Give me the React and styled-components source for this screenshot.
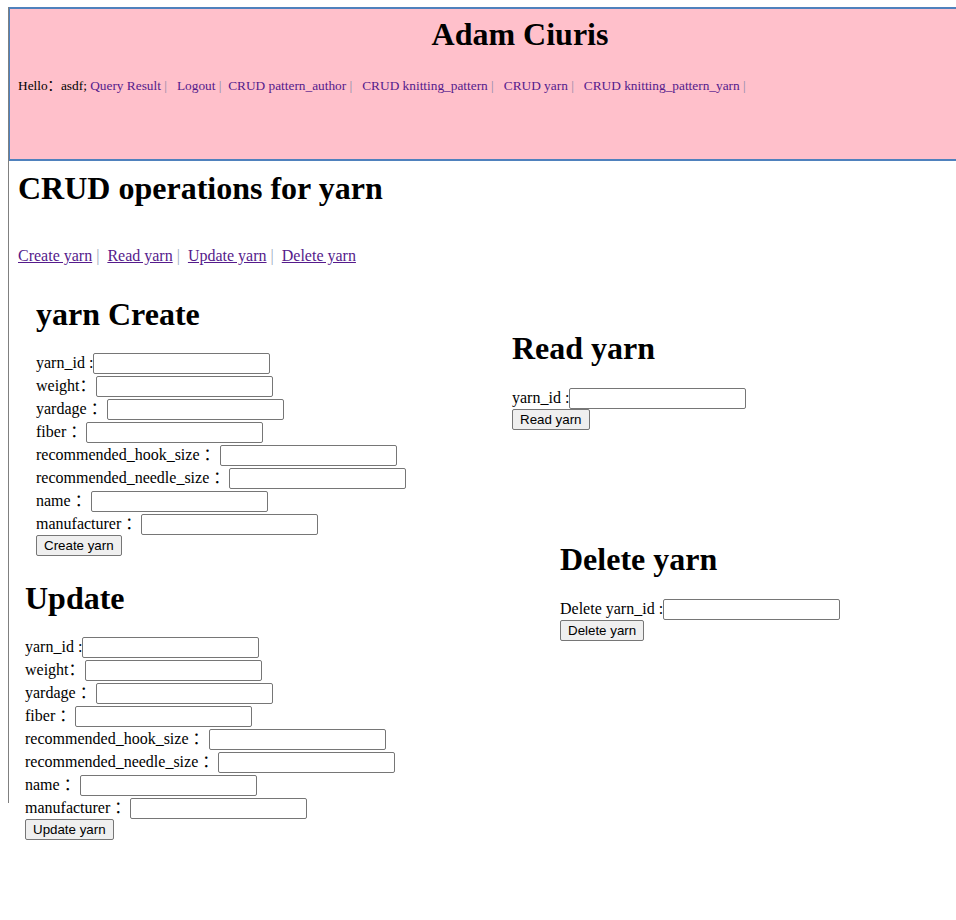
import React from 'react';
import styled, { createGlobalStyle } from 'styled-components';

const GlobalStyle = createGlobalStyle`
  body {
    margin: 0;
    background: #fff;
    color: #000;
    font-family: 'Liberation Serif', 'Noto Sans CJK SC', serif;
    font-size: 16px;
  }
`;

// the gray rule on the left stops short of the page's last rows, so it is
// drawn as a background stripe rather than a border
const Page = styled.div`
  margin: 7px 0 0 8px;
  padding-bottom: 60px;
  background: linear-gradient(#808080, #808080) no-repeat 0 0 / 1px 796px;
  overflow-x: clip;
`;

const Header = styled.header`
  width: 1023px;
  height: 154px;
  box-sizing: border-box;
  margin-left: 1px;
  background: #ffc0cb;
  border: 2px solid #4f81bd;
  border-left-width: 1px;
`;

const SiteTitle = styled.h1`
  margin: 0;
  padding-top: 7px;
  font-size: 32px;
  line-height: 37px;
  font-weight: bold;
  text-align: center;
`;

const Nav = styled.div`
  margin-top: 25px;
  padding-left: 8px;
  font-size: 13.33px;
  line-height: 15px;
`;

const NavLink = styled.a`
  color: #551a8b;
  text-decoration: none;
`;

const Bar = styled.span`
  color: ${(p) => p.$color || '#8a8aa8'};
`;

const Main = styled.main`
  padding-left: 10px;
`;

const PageTitle = styled.h1`
  margin: 9px 0 0;
  font-size: 32px;
  line-height: 37px;
  font-weight: bold;
`;

const OpLinks = styled.div`
  margin-top: 40px;
  font-size: 16px;
  line-height: 18px;
`;

const OpLink = styled.a`
  color: #551a8b;
  text-decoration: underline;
`;

const Columns = styled.div`
  display: flex;
  align-items: flex-start;
`;

const Column = styled.div`
  width: ${(p) => p.$width || 'auto'};
  flex: none;
`;

const Section = styled.section`
  margin-top: ${(p) => p.$top}px;
  padding-left: ${(p) => p.$indent || 0}px;
`;

const SectionTitle = styled.h1`
  margin: 0 0 ${(p) => p.$gap || 20}px;
  font-size: 32px;
  line-height: 37px;
  font-weight: bold;
`;

const Row = styled.div`
  display: flex;
  align-items: baseline;
  height: 23px;
  box-sizing: border-box;
  padding-top: 1px;
  line-height: 16px;
  white-space: pre;
`;

const Input = styled.input`
  width: 177px;
  height: 21px;
  box-sizing: border-box;
  margin: 0;
  padding: 1px 2px;
  border: 1px solid #767676;
  border-radius: 2px;
  background: #fff;
  font-family: 'Liberation Sans', Arial, sans-serif;
  font-size: 13.33px;
`;

const Button = styled.button`
  display: block;
  height: 21px;
  margin: -1px 0 0;
  padding: 0 7px;
  border: 1px solid #767676;
  border-radius: 2px;
  background: #efefef;
  color: #000;
  font-family: 'Liberation Sans', Arial, sans-serif;
  font-size: 13.33px;
`;

const NAV = [
  { label: 'Query Result', gap: 3 },
  { label: 'Logout', gap: 2 },
  { label: 'CRUD pattern_author', gap: 3 },
  { label: 'CRUD knitting_pattern', gap: 3 },
  { label: 'CRUD yarn', gap: 3 },
  { label: 'CRUD knitting_pattern_yarn', gap: 0 },
];

const OPS = ['Create yarn', 'Read yarn', 'Update yarn', 'Delete yarn'];

const FIELDS = [
  'yarn_id :',
  'weight：',
  'yardage ：',
  'fiber ：',
  'recommended_hook_size ：',
  'recommended_needle_size ：',
  'name ：',
  'manufacturer ：',
];

const YarnForm = ({ title, button, top, indent, gap }) => (
  <Section $top={top} $indent={indent}>
    <SectionTitle $gap={gap}>{title}</SectionTitle>
    {FIELDS.map((f) => (
      <Row key={f}>
        <span>{f}</span>
        <Input type="text" />
      </Row>
    ))}
    <Button type="button">{button}</Button>
  </Section>
);

const SingleForm = ({ title, label, button, top, indent }) => (
  <Section $top={top} $indent={indent}>
    <SectionTitle>{title}</SectionTitle>
    <Row>
      <span>{label}</span>
      <Input type="text" />
    </Row>
    <Button type="button">{button}</Button>
  </Section>
);

const App = () => (
  <>
    <GlobalStyle />
    <Page>
      <Header>
        <SiteTitle>Adam Ciuris</SiteTitle>
        <Nav>
          Hello：asdf;{' '}
          {NAV.map((n) => (
            <React.Fragment key={n.label}>
              <NavLink href="#">{n.label}</NavLink>
              <Bar>{'\u00a0|'}</Bar>
              {'\u00a0'.repeat(n.gap)}
            </React.Fragment>
          ))}
        </Nav>
      </Header>
      <Main>
        <PageTitle>CRUD operations for yarn</PageTitle>
        <OpLinks>
          {OPS.map((op, i) => (
            <React.Fragment key={op}>
              <OpLink href="#">{op}</OpLink>
              {i < OPS.length - 1 && (
                <>
                  <Bar $color="#9aa8bc">{'\u00a0|'}</Bar>
                  {'\u00a0\u00a0'}
                </>
              )}
            </React.Fragment>
          ))}
        </OpLinks>
        <Columns>
          <Column $width="494px">
            <YarnForm title="yarn Create" button="Create yarn" top={31} indent={18} gap={19} />
            <YarnForm title="Update" button="Update yarn" top={24} indent={7} gap={19} />
          </Column>
          <Column>
            <SingleForm title="Read yarn" label="yarn_id :" button="Read yarn" top={65} />
            <SingleForm
              title="Delete yarn"
              label="Delete yarn_id :"
              button="Delete yarn"
              top={111}
              indent={48}
            />
          </Column>
        </Columns>
      </Main>
    </Page>
  </>
);

export default App;
